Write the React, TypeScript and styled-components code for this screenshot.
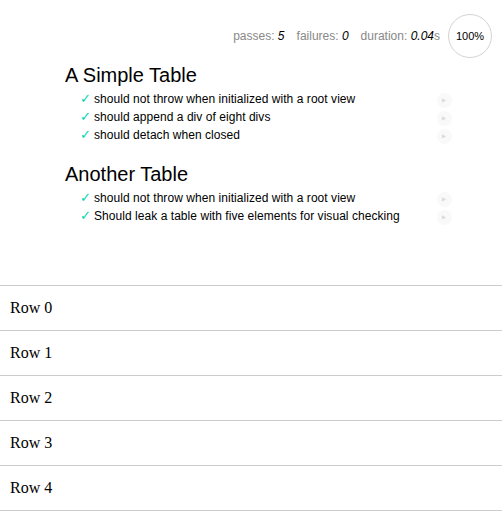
import React from "react";
import styled, { createGlobalStyle } from "styled-components";

const GlobalStyle = createGlobalStyle`
  html, body { margin: 0; padding: 0; background: #fff; }
  body { font-family: "Liberation Serif", "Times New Roman", serif; }
`;

const Page = styled.div`
  width: 100%;
`;

const StatsBar = styled.ul`
  list-style: none;
  margin: 0;
  box-sizing: border-box;
  height: 60px;
  padding: 14px 10px 0 0;
  display: flex;
  justify-content: flex-end;
  align-items: flex-start;
  font-family: "Liberation Sans", Arial, sans-serif;
  font-size: 12px;
  color: #888;
`;

const StatRow = styled.div`
  display: flex;
  align-items: center;
  height: 44px;
  gap: 12px;
`;

const Stat = styled.li`
  display: block;
  white-space: nowrap;
  em {
    color: #000;
  }
`;

const Progress = styled.li`
  display: flex;
  align-items: center;
  justify-content: center;
  box-sizing: border-box;
  width: 44px;
  height: 44px;
  margin-left: -4px;
  border: 1px solid #d4d4d4;
  border-radius: 50%;
  color: #000;
  font-size: 11px;
`;

const Report = styled.div`
  margin: 0 50px 60px;
  font-family: "Liberation Sans", Arial, sans-serif;
`;

const Suite = styled.section`
  margin-left: 15px;
  & + & {
    margin-top: 15px;
  }
`;

const SuiteTitle = styled.h1`
  margin: 0;
  font-size: 20px;
  line-height: 30px;
  font-weight: normal;
  color: #000;
`;

const TestList = styled.ul`
  list-style: none;
  margin: 0;
  padding: 0;
`;

const Test = styled.li`
  margin-left: 15px;
  display: flex;
  &::before {
    content: "✓";
    flex: 0 0 14px;
    font-family: "DejaVu Sans", sans-serif;
    font-size: 13px;
    line-height: 18px;
    color: #00d6b2;
  }
`;

const TestTitle = styled.h2`
  position: relative;
  flex: 1;
  margin: 0;
  font-size: 12px;
  line-height: 18px;
  letter-spacing: 0.05px;
  font-weight: normal;
  color: #000;
`;

const Replay = styled.a`
  position: absolute;
  top: 3px;
  right: 0;
  display: block;
  width: 15px;
  height: 15px;
  line-height: 15px;
  text-align: center;
  background: #eee;
  border-radius: 15px;
  font-size: 15px;
  color: #888;
  opacity: 0.3;
  text-decoration: none;
`;

const Table = styled.div`
  border-top: 1px solid #ccc;
`;

const Row = styled.div`
  box-sizing: border-box;
  height: 45px;
  display: flex;
  align-items: center;
  padding-left: 10px;
  border-bottom: 1px solid #ccc;
  font-family: "Liberation Serif", "Times New Roman", serif;
  font-size: 16px;
  color: #000;
`;

const suites = [
  {
    title: "A Simple Table",
    tests: [
      "should not throw when initialized with a root view",
      "should append a div of eight divs",
      "should detach when closed",
    ],
  },
  {
    title: "Another Table",
    tests: [
      "should not throw when initialized with a root view",
      "Should leak a table with five elements for visual checking",
    ],
  },
];

export default function App() {
  return (
    <Page>
      <GlobalStyle />
      <StatsBar>
        <StatRow>
          <Stat>
            passes: <em>5</em>
          </Stat>
          <Stat>
            failures: <em>0</em>
          </Stat>
          <Stat>
            duration: <em>0.04</em>s
          </Stat>
          <Progress>100%</Progress>
        </StatRow>
      </StatsBar>
      <Report>
        {suites.map((s) => (
          <Suite key={s.title}>
            <SuiteTitle>{s.title}</SuiteTitle>
            <TestList>
              {s.tests.map((t) => (
                <Test key={t}>
                  <TestTitle>
                    {t}
                    <Replay href="#">‣</Replay>
                  </TestTitle>
                </Test>
              ))}
            </TestList>
          </Suite>
        ))}
      </Report>
      <Table>
        {[0, 1, 2, 3, 4].map((i) => (
          <Row key={i}>Row {i}</Row>
        ))}
      </Table>
    </Page>
  );
}
